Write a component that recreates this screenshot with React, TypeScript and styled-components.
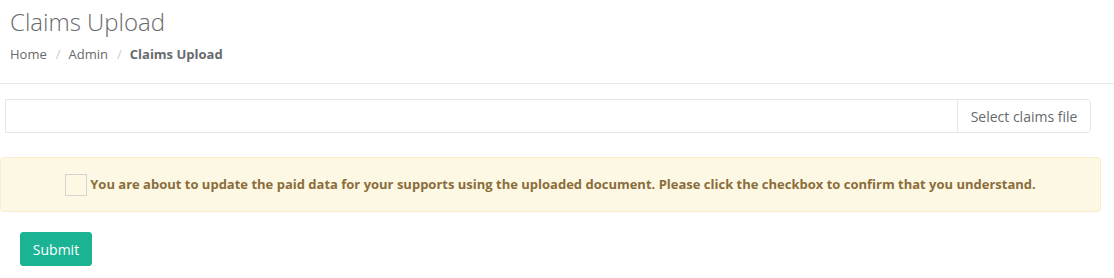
import React, { useState } from "react";
import styled, { createGlobalStyle } from "styled-components";

const GlobalStyle = createGlobalStyle`
  html, body {
    margin: 0;
    padding: 0;
    background: #ffffff;
    font-family: "Open Sans", "Liberation Sans", sans-serif;
    color: #676a6c;
    font-size: 13px;
  }
  * { box-sizing: border-box; }
`;

const Page = styled.div`
  width: 1114px;
  display: flex;
  flex-direction: column;
`;

const PageHeading = styled.header`
  padding: 8px 10px 20px 10px;
  border-bottom: 1px solid #e7eaec;
  display: flex;
  flex-direction: column;
  gap: 9px;
`;

const Title = styled.h2`
  margin: 0;
  font-size: 24px;
  font-weight: 300;
  line-height: 28px;
  color: #676a6c;
`;

const Breadcrumb = styled.ol`
  margin: 0;
  padding: 0;
  list-style: none;
  display: flex;
  align-items: center;
  font-size: 13px;
  line-height: 18px;
`;

const Crumb = styled.li<{ $active?: boolean }>`
  color: #676a6c;
  font-weight: ${(p) => (p.$active ? 700 : 400)};
`;

const Sep = styled.span`
  color: #cccccc;
  padding: 0 8px 0 9px;
`;

const Content = styled.main`
  display: flex;
  flex-direction: column;
  padding-top: 15px;
`;

const FileRow = styled.div`
  margin-left: 5px;
  width: 1086px;
  height: 34px;
  display: flex;
`;

const FileInput = styled.div`
  flex: 1;
  border: 1px solid #e5e6e7;
  border-right: none;
  border-radius: 1px 0 0 1px;
  background: #ffffff;
`;

const FileButton = styled.button`
  width: 134px;
  border: 1px solid #e5e6e7;
  border-radius: 0 4px 4px 0;
  background: #ffffff;
  color: #676a6c;
  font-family: inherit;
  font-size: 14px;
  padding: 0 12px;
  cursor: pointer;
`;

const Alert = styled.div`
  margin-top: 24px;
  width: 1101px;
  height: 55px;
  background: #fcf8e3;
  border: 1px solid #faebcc;
  border-radius: 4px;
  color: #8a6d3b;
  display: flex;
  align-items: center;
  justify-content: center;
  gap: 3px;
  font-weight: 700;
  font-size: 13px;
`;

const AlertText = styled.span`
  margin-top: -2px;
`;

const Check = styled.span<{ $on: boolean }>`
  width: 22px;
  height: 22px;
  border: 1px solid #d2d2d2;
  background: ${(p) => (p.$on ? "#1ab394" : "transparent")};
  display: inline-block;
  cursor: pointer;
`;

const SubmitRow = styled.div`
  padding: 20px 0 0 20px;
  display: flex;
`;

const SubmitButton = styled.button`
  width: 72px;
  height: 34px;
  background: #1ab394;
  border: 1px solid #1ab394;
  border-radius: 3px;
  color: #ffffff;
  font-family: inherit;
  font-size: 14px;
  cursor: pointer;
`;

export default function App() {
  const [on, setOn] = useState(false);
  return (
    <Page>
      <GlobalStyle />
      <PageHeading>
        <Title>Claims Upload</Title>
        <Breadcrumb>
          <Crumb>Home</Crumb>
          <Sep>/</Sep>
          <Crumb>Admin</Crumb>
          <Sep>/</Sep>
          <Crumb $active>Claims Upload</Crumb>
        </Breadcrumb>
      </PageHeading>
      <Content>
        <FileRow>
          <FileInput />
          <FileButton>Select claims file</FileButton>
        </FileRow>
        <Alert>
          <Check $on={on} onClick={() => setOn(!on)} />
          <AlertText>
            You are about to update the paid data for your supports using the uploaded document. Please click the checkbox to confirm that you understand.
          </AlertText>
        </Alert>
        <SubmitRow>
          <SubmitButton>Submit</SubmitButton>
        </SubmitRow>
      </Content>
    </Page>
  );
}
